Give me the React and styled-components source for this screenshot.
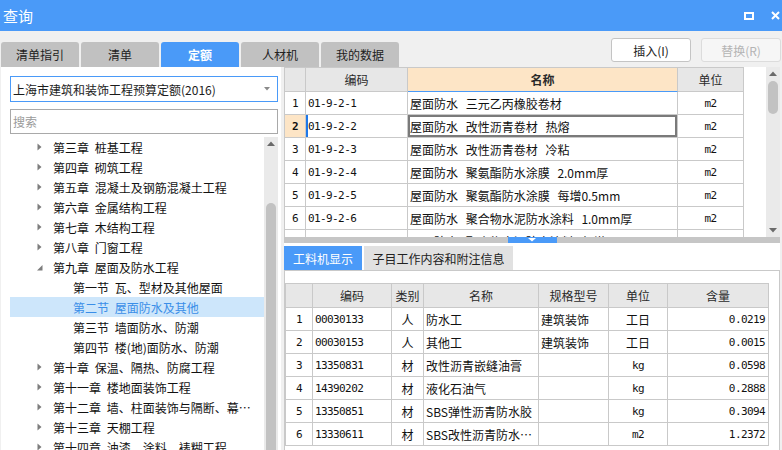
import React from 'react';
import styled, { createGlobalStyle } from 'styled-components';

const CJK = `"Noto Sans CJK SC", "Noto Sans", sans-serif`;
const MONO = `"DejaVu Sans Mono", "Liberation Mono", "Noto Sans CJK SC", monospace`;
const BLUE = '#4a9af8';
const LINE = '#c9c9c9';

const GlobalStyle = createGlobalStyle`
  html, body { margin: 0; padding: 0; background: #f0f0f0; }
  body { font-family: ${CJK}; font-size: 12px; color: #1c1c1c; }
  * { box-sizing: border-box; }
`;

const Window = styled.div`
  width: 782px;
  height: 450px;
  overflow: hidden;
  display: flex;
  flex-direction: column;
  background: #f0f0f0;
`;

const TitleBar = styled.div`
  height: 31px;
  flex: none;
  background: ${BLUE};
  color: #fff;
  display: flex;
  align-items: center;
  justify-content: space-between;
  padding: 0 2px 0 3px;
`;

const Title = styled.div`
  font-size: 15px;
  line-height: 1;
`;

const WinControls = styled.div`
  display: flex;
  align-items: center;
  gap: 17px;
`;

const TopBar = styled.div`
  height: 36px;
  flex: none;
  display: flex;
  justify-content: space-between;
  padding: 0 1px;
`;

const Tabs = styled.div`
  display: flex;
  gap: 2px;
  align-self: flex-end;
`;

const Tab = styled.div`
  width: 78px;
  height: 25px;
  border-radius: 3px 3px 0 0;
  display: flex;
  align-items: center;
  justify-content: center;
  font-size: 12px;
  background: ${p => (p.$active ? BLUE : '#c1c1c1')};
  color: ${p => (p.$active ? '#fff' : '#222')};
  font-weight: ${p => (p.$active ? 700 : 400)};
`;

const Buttons = styled.div`
  display: flex;
  gap: 10px;
  padding-top: 7px;
`;

const Button = styled.div`
  width: 80px;
  height: 24px;
  border-radius: 3px;
  display: flex;
  align-items: center;
  justify-content: center;
  font-size: 12px;
  background: ${p => (p.$disabled ? '#f6f6f6' : '#fff')};
  border: 1px solid ${p => (p.$disabled ? '#dcdcdc' : '#c4c4c4')};
  color: ${p => (p.$disabled ? '#b4b4b4' : '#222')};
`;

const Main = styled.div`
  flex: 1;
  min-height: 0;
  display: flex;
  gap: 3px;
  padding-left: 1px;
`;

const LeftPanel = styled.div`
  width: 280px;
  flex: none;
  background: #fff;
  display: flex;
  flex-direction: column;
  padding: 9px 3px 0 9px;
`;

const Select = styled.div`
  height: 26px;
  flex: none;
  border: 1px solid ${BLUE};
  display: flex;
  align-items: center;
  justify-content: space-between;
  padding: 0 7px 0 2px;
  font-size: 12px;
  color: #1c1c1c;
`;

const Search = styled.div`
  height: 25px;
  flex: none;
  margin-top: 7px;
  border: 1px solid #a9a9a9;
  display: flex;
  align-items: center;
  padding-left: 2px;
  color: #9a9a9a;
  font-size: 12px;
`;

const TreeArea = styled.div`
  flex: 1;
  min-height: 0;
  margin-top: 3px;
  display: flex;
`;

const TreeList = styled.div`
  flex: 1;
  min-width: 0;
  overflow: hidden;
`;

const TreeRow = styled.div`
  height: 20px;
  display: flex;
  align-items: center;
  padding-left: ${p => p.$indent}px;
  padding-right: 10px;
  background: ${p => (p.$selected ? '#cde6fb' : 'transparent')};
  color: ${p => (p.$selected ? '#3a8ee8' : '#111')};
  font-size: 12px;
  white-space: nowrap;
  word-spacing: 3px;
`;

const ArrowSlot = styled.span`
  width: 16px;
  flex: none;
  display: flex;
  align-items: center;
`;

const TreeText = styled.span`
  overflow: hidden;
  text-overflow: ellipsis;
  min-width: 0;
`;

const Track = styled.div`
  width: 14px;
  flex: none;
  background: #eaeaea;
  display: flex;
  flex-direction: column;
  align-items: center;
  overflow: hidden;
`;

const ArrowBox = styled.div`
  height: 13px;
  flex: none;
  display: flex;
  align-items: center;
  justify-content: center;
  margin-top: ${p => (p.$bottom ? 'auto' : '0')};
`;

const Thumb = styled.div`
  width: 10px;
  flex: none;
  border-radius: 5px;
  background: #c2c2c2;
  margin-top: ${p => p.$gap}px;
  height: ${p => p.$h}px;
`;

const RightPanel = styled.div`
  width: 496px;
  flex: none;
  display: flex;
  flex-direction: column;
  background: #fff;
`;

const TopArea = styled.div`
  height: 170px;
  flex: none;
  display: flex;
`;

const TopTable = styled.div`
  width: 460px;
  flex: none;
  border-left: 1px solid ${LINE};
  border-top: 1px solid ${LINE};
  overflow: hidden;
`;

const Filler = styled.div`
  flex: 1;
  background: #fff;
`;

const Row = styled.div`
  display: grid;
  grid-template-columns: ${p => p.$cols};
  height: ${p => p.$h}px;
`;

const Cell = styled.div`
  border-right: 1px solid ${LINE};
  border-bottom: 1px solid ${p => (p.$underline ? BLUE : LINE)};
  display: flex;
  align-items: center;
  justify-content: ${p => (p.$align === 'center' ? 'center' : p.$align === 'right' ? 'flex-end' : 'flex-start')};
  padding-left: 2px;
  padding-right: ${p => (p.$padR != null ? p.$padR : p.$align === 'right' ? 3 : 2)}px;
  overflow: hidden;
  white-space: nowrap;
  font-family: ${p => (p.$mono ? MONO : CJK)};
  font-size: ${p => (p.$mono ? 11 : 12)}px;
  letter-spacing: ${p => (p.$mono ? '-0.6px' : '0')};
  word-spacing: ${p => (p.$mono ? '0' : '5px')};
  font-weight: ${p => (p.$bold ? 700 : 400)};
  background: ${p => p.$bg || 'transparent'};
  color: ${p => (p.$head ? '#2a2a2a' : '#111')};
  box-shadow: ${p => (p.$focus ? 'inset 0 0 0 2px #7a7a7a' : p.$marker ? `inset 2px 0 0 #1f78e8` : 'none')};
`;

const CellText = styled.span`
  overflow: hidden;
  text-overflow: ellipsis;
  min-width: 0;
`;

const Splitter = styled.div`
  height: 6px;
  flex: none;
  background: #c6c6c6;
  display: flex;
  justify-content: center;
`;

const SplitHandle = styled.div`
  width: 49px;
  background: ${BLUE};
  display: flex;
  justify-content: center;
  padding-top: 1px;
`;

const BottomArea = styled.div`
  flex: 1;
  min-height: 0;
  display: flex;
  flex-direction: column;
  background: #fff;
`;

const SubTabs = styled.div`
  height: 28px;
  flex: none;
  padding-top: 3px;
  display: flex;
  gap: 2px;
  border-bottom: 1px solid ${LINE};
`;

const SubTab = styled.div`
  width: ${p => p.$w}px;
  display: flex;
  align-items: center;
  justify-content: center;
  font-size: 12px;
  background: ${p => (p.$active ? BLUE : '#e1e1e1')};
  color: ${p => (p.$active ? '#fff' : '#222')};
`;

const SubContent = styled.div`
  flex: 1;
  min-height: 0;
  border-left: 1px solid ${LINE};
  border-right: 1px solid ${LINE};
  padding-top: 12px;
  overflow: hidden;
`;

const BottomTable = styled.div`
  width: 484px;
  border-left: 1px solid ${LINE};
  border-top: 1px solid ${LINE};
`;

const UpArrow = () => (
  <svg width="8" height="5" viewBox="0 0 8 5"><polygon points="0,5 4,0.5 8,5" fill="#6a6a6a" /></svg>
);
const DownArrow = () => (
  <svg width="8" height="5" viewBox="0 0 8 5"><polygon points="0,0 8,0 4,4.5" fill="#6a6a6a" /></svg>
);

const Scrollbar = ({ gap, h, down }) => (
  <Track>
    <ArrowBox><UpArrow /></ArrowBox>
    <Thumb $gap={gap} $h={h} />
    {down && <ArrowBox $bottom><DownArrow /></ArrowBox>}
  </Track>
);

const tree = [
  { t: '第三章 桩基工程', lv: 1 },
  { t: '第四章 砌筑工程', lv: 1 },
  { t: '第五章 混凝土及钢筋混凝土工程', lv: 1 },
  { t: '第六章 金属结构工程', lv: 1 },
  { t: '第七章 木结构工程', lv: 1 },
  { t: '第八章 门窗工程', lv: 1 },
  { t: '第九章 屋面及防水工程', lv: 1, open: true },
  { t: '第一节 瓦、型材及其他屋面', lv: 2 },
  { t: '第二节 屋面防水及其他', lv: 2, sel: true },
  { t: '第三节 墙面防水、防潮', lv: 2 },
  { t: '第四节 楼(地)面防水、防潮', lv: 2 },
  { t: '第十章 保温、隔热、防腐工程', lv: 1 },
  { t: '第十一章 楼地面装饰工程', lv: 1 },
  { t: '第十二章 墙、柱面装饰与隔断、幕墙工程', lv: 1 },
  { t: '第十三章 天棚工程', lv: 1 },
  { t: '第十四章 油漆、涂料、裱糊工程', lv: 1 },
];

const quotas = [
  ['1', '01-9-2-1', '屋面防水 三元乙丙橡胶卷材', 'm2'],
  ['2', '01-9-2-2', '屋面防水 改性沥青卷材 热熔', 'm2'],
  ['3', '01-9-2-3', '屋面防水 改性沥青卷材 冷粘', 'm2'],
  ['4', '01-9-2-4', '屋面防水 聚氨酯防水涂膜 2.0mm厚', 'm2'],
  ['5', '01-9-2-5', '屋面防水 聚氨酯防水涂膜 每增0.5mm', 'm2'],
  ['6', '01-9-2-6', '屋面防水 聚合物水泥防水涂料 1.0mm厚', 'm2'],
  ['7', '01-9-2-7', '屋面防水 聚合物水泥防水涂料 每增0.5mm', 'm2'],
];

const materials = [
  ['1', '00030133', '人', '防水工', '建筑装饰', '工日', '0.0219'],
  ['2', '00030153', '人', '其他工', '建筑装饰', '工日', '0.0015'],
  ['3', '13350831', '材', '改性沥青嵌缝油膏', '', 'kg', '0.0598'],
  ['4', '14390202', '材', '液化石油气', '', 'kg', '0.2888'],
  ['5', '13350851', '材', 'SBS弹性沥青防水胶', '', 'kg', '0.3094'],
  ['6', '13330611', '材', 'SBS改性沥青防水卷材', '', 'm2', '1.2372'],
];

const TOP_COLS = '21px 102px 270px 66px';
const BOT_COLS = '27px 79px 32px 115px 70px 59px 101px';
const HEAD_BG = '#e7e7e7';
const PEACH = '#fde5c6';

export default function App() {
  return (
    <>
      <GlobalStyle />
      <Window>
        <TitleBar>
          <Title>查询</Title>
          <WinControls>
            <svg width="10" height="8" viewBox="0 0 10 8">
              <rect x="1" y="1" width="8" height="6" fill="none" stroke="#fff" strokeWidth="2" />
            </svg>
            <svg width="9" height="9" viewBox="0 0 9 9">
              <path d="M1 1 L8 8 M8 1 L1 8" stroke="#fff" strokeWidth="2" />
            </svg>
          </WinControls>
        </TitleBar>

        <TopBar>
          <Tabs>
            <Tab>清单指引</Tab>
            <Tab>清单</Tab>
            <Tab $active>定额</Tab>
            <Tab>人材机</Tab>
            <Tab>我的数据</Tab>
          </Tabs>
          <Buttons>
            <Button>插入(I)</Button>
            <Button $disabled>替换(R)</Button>
          </Buttons>
        </TopBar>

        <Main>
          <LeftPanel>
            <Select>
              <span>上海市建筑和装饰工程预算定额(2016)</span>
              <svg width="6" height="4" viewBox="0 0 6 4"><polygon points="0,0 6,0 3,3.5" fill="#8a8a8a" /></svg>
            </Select>
            <Search>搜索</Search>
            <TreeArea>
              <TreeList>
                {tree.map((n, i) => (
                  <TreeRow key={i} $indent={n.lv === 1 ? 27 : 63} $selected={n.sel}>
                    {n.lv === 1 && (
                      <ArrowSlot>
                        {n.open ? (
                          <svg width="6" height="7" viewBox="0 0 6 7"><polygon points="5.5,1 5.5,6.5 0,6.5" fill="#7d7d7d" /></svg>
                        ) : (
                          <svg width="5" height="8" viewBox="0 0 5 8"><polygon points="0.5,0.5 4.5,4 0.5,7.5" fill="#7d7d7d" /></svg>
                        )}
                      </ArrowSlot>
                    )}
                    <TreeText>{n.t}</TreeText>
                  </TreeRow>
                ))}
              </TreeList>
              <Scrollbar gap={53} h={320} />
            </TreeArea>
          </LeftPanel>

          <RightPanel>
            <TopArea>
              <TopTable>
                <Row $cols={TOP_COLS} $h={24}>
                  <Cell $head $bg={HEAD_BG} />
                  <Cell $head $bg={HEAD_BG} $align="center">编码</Cell>
                  <Cell $head $bg={PEACH} $align="center" $bold $underline>名称</Cell>
                  <Cell $head $bg={HEAD_BG} $align="center">单位</Cell>
                </Row>
                {quotas.map(r => {
                  const cur = r[0] === '2';
                  return (
                    <Row key={r[0]} $cols={TOP_COLS} $h={23}>
                      <Cell $align="center" $mono $bg={cur ? PEACH : undefined} $bold={cur}>{r[0]}</Cell>
                      <Cell $mono $marker={cur}>{r[1]}</Cell>
                      <Cell $focus={cur}>{r[2]}</Cell>
                      <Cell $align="center" $mono>{r[3]}</Cell>
                    </Row>
                  );
                })}
              </TopTable>
              <Filler />
              <Scrollbar gap={1} h={33} down />
            </TopArea>

            <Splitter>
              <SplitHandle>
                <svg width="8" height="4" viewBox="0 0 8 4"><polygon points="0,0 8,0 4,3.5" fill="#fff" /></svg>
              </SplitHandle>
            </Splitter>

            <BottomArea>
              <SubTabs>
                <SubTab $w={78} $active>工料机显示</SubTab>
                <SubTab $w={149}>子目工作内容和附注信息</SubTab>
              </SubTabs>
              <SubContent>
                <BottomTable>
                  <Row $cols={BOT_COLS} $h={24}>
                    <Cell $head $bg={HEAD_BG} />
                    <Cell $head $bg={HEAD_BG} $align="center">编码</Cell>
                    <Cell $head $bg={HEAD_BG} $align="center">类别</Cell>
                    <Cell $head $bg={HEAD_BG} $align="center">名称</Cell>
                    <Cell $head $bg={HEAD_BG} $align="center">规格型号</Cell>
                    <Cell $head $bg={HEAD_BG} $align="center">单位</Cell>
                    <Cell $head $bg={HEAD_BG} $align="center">含量</Cell>
                  </Row>
                  {materials.map(r => (
                    <Row key={r[0]} $cols={BOT_COLS} $h={23}>
                      <Cell $align="center" $mono>{r[0]}</Cell>
                      <Cell $mono>{r[1]}</Cell>
                      <Cell $align="center">{r[2]}</Cell>
                      <Cell $padR={1}><CellText>{r[3]}</CellText></Cell>
                      <Cell>{r[4]}</Cell>
                      <Cell $align="center" $mono={r[5] !== '工日'}>{r[5]}</Cell>
                      <Cell $align="right" $mono>{r[6]}</Cell>
                    </Row>
                  ))}
                </BottomTable>
              </SubContent>
            </BottomArea>
          </RightPanel>
        </Main>
      </Window>
    </>
  );
}
